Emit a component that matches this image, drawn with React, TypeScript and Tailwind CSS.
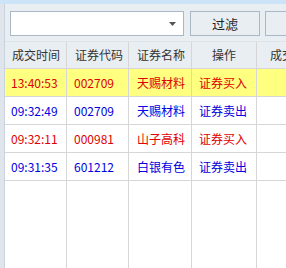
import React from "react";

const rows = [
  { time: "13:40:53", code: "002709", name: "天赐材料", op: "证券买入", color: "text-[#e00000]", bg: "bg-[#ffff80]" },
  { time: "09:32:49", code: "002709", name: "天赐材料", op: "证券卖出", color: "text-[#0000e0]", bg: "bg-white" },
  { time: "09:32:11", code: "000981", name: "山子高科", op: "证券买入", color: "text-[#e00000]", bg: "bg-white" },
  { time: "09:31:35", code: "601212", name: "白银有色", op: "证券卖出", color: "text-[#0000e0]", bg: "bg-white" },
];

const cols = "grid grid-cols-[62px_62px_63px_65px_1fr]";
const cell = "border-r border-[#d6d6d6] flex items-center";

export default function App() {
  return (
    <div
      className="w-[286px] h-[268px] overflow-hidden bg-[#e9eef3] flex flex-col text-[12px]"
      style={{ fontFamily: '"Noto Sans CJK SC", "Noto Sans", sans-serif' }}
    >
      <div className="h-[4px] bg-[#cce3f8]" />
      <div className="flex flex-1 min-h-0">
        <div className="w-[5px] shrink-0 bg-[#dfe5eb] border-r border-[#c9d3dd]" />
        <div className="flex-1 flex flex-col min-w-0 overflow-hidden">
          <div className="flex pt-[7px] pl-[5px] gap-[6px] shrink-0">
            <div className="w-[174px] h-[25px] shrink-0 bg-white border border-[#a9b7c6] flex items-center justify-end pr-[7px]">
              <svg width="7" height="4" viewBox="0 0 7 4">
                <path d="M0 0h7L3.5 4z" fill="#555" />
              </svg>
            </div>
            <div className="w-[70px] h-[25px] shrink-0 border border-[#a9b7c6] bg-[#e9eef3] flex items-center justify-center text-[13px] text-[#222]">
              过滤
            </div>
            <div className="w-[40px] h-[25px] shrink-0 -ml-px border border-[#a9b7c6] bg-[#e9eef3]" />
          </div>
          <div className="mt-[5px] flex-1 flex flex-col bg-white border-t border-[#dde3e9] min-h-0">
            <div className={`${cols} h-[27px] bg-[#e9eef3] border-b border-[#d6d6d6] text-[#333] shrink-0`}>
              <div className={`${cell} pl-[7px]`}>成交时间</div>
              <div className={`${cell} pl-[8px]`}>证券代码</div>
              <div className={`${cell} pl-[8px]`}>证券名称</div>
              <div className={`${cell} justify-center`}>操作</div>
              <div className="flex items-center pl-[13px] whitespace-nowrap overflow-hidden">成交数量</div>
            </div>
            {rows.map((r) => (
              <div key={r.time} className={`${cols} h-[28px] border-b border-[#d6d6d6] ${r.bg} ${r.color} shrink-0`}>
                <div className={`${cell} pl-[6px]`}>{r.time}</div>
                <div className={`${cell} pl-[7px]`}>{r.code}</div>
                <div className={`${cell} pl-[8px]`}>{r.name}</div>
                <div className={`${cell} pl-[7px]`}>{r.op}</div>
                <div />
              </div>
            ))}
            <div className={`${cols} flex-1`}>
              <div className={cell} />
              <div className={cell} />
              <div className={cell} />
              <div className={cell} />
              <div />
            </div>
          </div>
        </div>
      </div>
    </div>
  );
}
